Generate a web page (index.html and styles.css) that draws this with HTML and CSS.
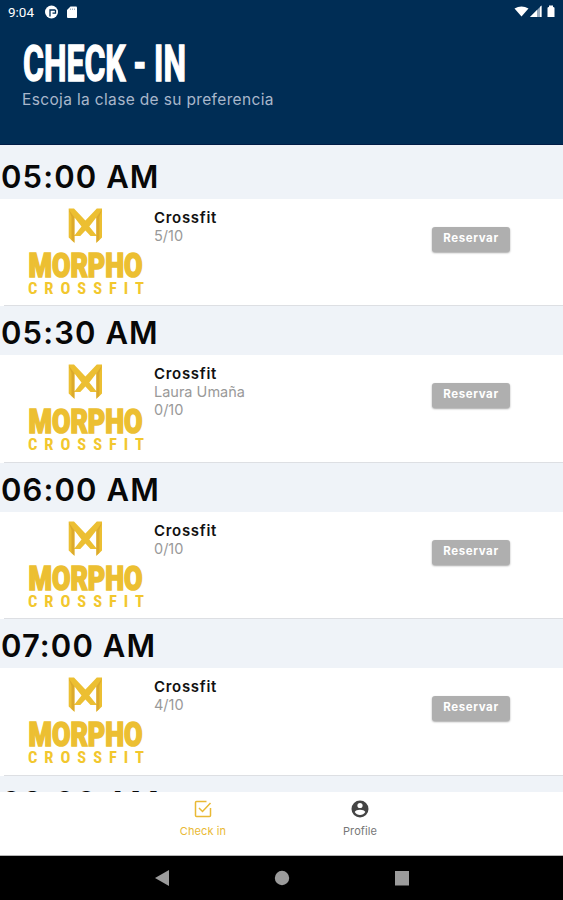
FILE: index.html
```
<!DOCTYPE html>
<html lang="es">
<head>
    <meta charset="UTF-8">
    <meta name="viewport" content="width=device-width, initial-scale=1.0">
    <title>Check - In</title>
    <link rel="stylesheet" href="styles.css">
</head>
<body>
    <!-- logo compartido por todas las clases -->
    <svg class="defs" width="0" height="0">
        <symbol id="logo" viewBox="0 0 130 100">
            <path fill="#ecbf32" d="M48.7 8.500H54L65.400 20.500 76.800 8.500H82V37.500L76.300 43V17.500L69.300 26.500 77 36H70.500L65.400 30.500 60.300 36H54L61.500 26.500 54.500 17.500V43L48.700 37.500Z"/>
            <path fill="#d29c28" d="M48.700 9.500L54.500 17.500V42.500L51.500 40V17ZM82 9.500L76.300 17.500V42.500L79.300 40V17Z" opacity=".6"/>
            <text class="logo-name" x="8.500" y="76.500" textLength="114" lengthAdjust="spacingAndGlyphs">MORPHO</text>
            <text class="logo-sub" x="8" y="94" textLength="116">CROSSFIT</text>
        </symbol>
    </svg>

    <header class="header">
        <div class="status-bar">
            <span class="clock">9:04</span>
            <svg class="status-left" width="34" height="14" viewBox="0 0 34 14">
                <circle cx="6.500" cy="7" r="6.500" fill="#fff"/>
                <path d="M5 11.500V5H10.500M7.500 8.200H10.500V5" fill="none" stroke="#002d55" stroke-width="1.300"/>
                <path d="M25.500 1.500H31Q32 1.500 32 2.500V12Q32 13 31 13H23Q22 13 22 12V5Z" fill="#fff"/>
                <path d="M25.500 3.500V5M27.500 3.500V5M29.500 3.500V5" stroke="#8ba0b5" stroke-width=".8"/>
            </svg>
            <svg class="status-right" width="44" height="14" viewBox="0 0 44 14">
                <path d="M.5 3.500Q7.500 -.5 14.500 3.500L7.500 11.500Z" fill="#fff"/>
                <path d="M16 12L27.500 .5V12Z" fill="#9aabbe"/>
                <path d="M16 12L23 5V12ZM26 2L27.500 .5V12H26Z" fill="#fff"/>
                <path d="M33.500 3Q33.500 2 35 2V.5H39V2Q40.500 2 40.500 3V12H33.500Z" fill="#fff"/>
            </svg>
        </div>
        <svg class="title" width="176" height="62" role="heading" aria-level="1">
            <text x="0" y="50" textLength="163" lengthAdjust="spacingAndGlyphs">CHECK - IN</text>
        </svg>
        <p class="subtitle">Escoja la clase de su preferencia</p>
    </header>

    <main class="schedule">
        <section class="slot">
            <h2>05:00 AM</h2>
            <div class="class-row">
                <svg class="logo"><use href="#logo"/></svg>
                <div class="info">
                    <h3>Crossfit</h3>
                    <p>5/10</p>
                </div>
                <button class="reserve">Reservar</button>
            </div>
        </section>
        <section class="slot">
            <h2>05:30 AM</h2>
            <div class="class-row">
                <svg class="logo"><use href="#logo"/></svg>
                <div class="info">
                    <h3>Crossfit</h3>
                    <p>Laura Umaña</p>
                    <p>0/10</p>
                </div>
                <button class="reserve">Reservar</button>
            </div>
        </section>
        <section class="slot">
            <h2>06:00 AM</h2>
            <div class="class-row">
                <svg class="logo"><use href="#logo"/></svg>
                <div class="info">
                    <h3>Crossfit</h3>
                    <p>0/10</p>
                </div>
                <button class="reserve">Reservar</button>
            </div>
        </section>
        <section class="slot">
            <h2>07:00 AM</h2>
            <div class="class-row">
                <svg class="logo"><use href="#logo"/></svg>
                <div class="info">
                    <h3>Crossfit</h3>
                    <p>4/10</p>
                </div>
                <button class="reserve">Reservar</button>
            </div>
        </section>
        <section class="slot">
            <h2>08:00 AM</h2>
        </section>
    </main>

    <nav class="tabs">
        <a class="tab active">
            <svg width="18" height="18" viewBox="0 0 18 18" fill="none" stroke="currentColor" stroke-width="1.500">
                <path d="M12.500 1.500H2.500Q1.500 1.500 1.500 2.500V15.500Q1.500 16.500 2.500 16.500H15.500Q16.500 16.500 16.500 15.500V8"/>
                <path d="M5 8L8.500 11.500L16.500 3"/>
            </svg>
            <span>Check in</span>
        </a>
        <a class="tab">
            <svg width="18" height="18" viewBox="0 0 18 18">
                <circle cx="9" cy="9" r="8.500" fill="#444"/>
                <circle cx="9" cy="5.500" r="2.600" fill="#fff"/>
                <path d="M3.700 12Q5 9.800 9 9.800T14.300 12Q12.500 15 9 15T3.700 12Z" fill="#fff"/>
            </svg>
            <span>Profile</span>
        </a>
    </nav>

    <footer class="android-nav">
        <svg width="16" height="18" viewBox="0 0 16 18"><path d="M15 1V17L1 9Z" fill="#9b9b9b"/></svg>
        <svg width="16" height="18" viewBox="0 0 16 18"><circle cx="8" cy="9" r="7.200" fill="#9b9b9b"/></svg>
        <svg width="16" height="18" viewBox="0 0 16 18"><path d="M1 2H15V16.500H1Z" fill="#9b9b9b"/></svg>
    </footer>
</body>
</html>
```
FILE: styles.css
```
* {
    box-sizing: border-box;
}

body {
    margin: 0;
    height: 900px;
    display: flex;
    flex-direction: column;
    overflow: hidden;
    background-color: #fff;
    font-family: Inter, Roboto, sans-serif;
}

h2, h3, p {
    margin: 0;
}

.defs {
    position: absolute;
}

.header {
    height: 145px;
    flex: none;
    background-color: #002d55;
    border-bottom: 1px solid #001c46;
    color: #fff;
}

.status-bar {
    display: flex;
    align-items: center;
    height: 24px;
    padding: 0 5px 0 8px;
}

.clock {
    width: 37px;
    font: 400 13.5px Roboto, sans-serif;
}

.status-right {
    margin-left: auto;
}

.title {
    display: block;
    margin: 7px 0 0 23px;
}

.title text {
    font: 700 50px Roboto, sans-serif;
    fill: #fff;
    stroke: #fff;
    stroke-width: 1.4px;
}

.subtitle {
    margin-left: 22px;
    margin-top: -3px;
    font-size: 15.5px;
    line-height: 20px;
    letter-spacing: 0.35px;
    color: #a9b7cb;
}

.schedule {
    height: 647px;
    flex: none;
    padding-top: 5px;
    overflow: hidden;
    background-color: #eff3f8;
}

.slot {
    height: 156.4px;
}

.slot h2 {
    height: 49px;
    padding-left: 1px;
    line-height: 53px;
    font-size: 31px;
    font-weight: 600;
    letter-spacing: 1.1px;
    color: #080808;
    white-space: nowrap;
}

.class-row {
    display: flex;
    align-items: flex-start;
    height: 107.4px;
    background: linear-gradient(#dddfe3, #dddfe3) 4px 100% / 100% 1px no-repeat #fff;
}

.logo {
    width: 130px;
    height: 100px;
    margin: 1px 0 0 20px;
    flex: none;
}

.logo-name {
    font: 900 33px Roboto, sans-serif;
    fill: #ecbf32;
    stroke: #ecbf32;
    stroke-width: 1.6px;
}

.logo-sub {
    font: 700 16.5px "Liberation Sans Narrow", "Roboto Condensed", Roboto, sans-serif;
    fill: #f2c72e;
}

.info {
    width: 282px;
    padding: 9px 0 0 4px;
    font-size: 14.5px;
    line-height: 17.5px;
    color: #999;
}

.info h3 {
    font-size: 15px;
    line-height: 19px;
    font-weight: 600;
    letter-spacing: 0.7px;
    color: #111;
}

.reserve {
    width: 78px;
    height: 25px;
    margin-top: 28px;
    padding: 0 0 3px;
    border: none;
    border-radius: 3px;
    background-color: #afafaf;
    box-shadow: 0 1px 2px rgba(0, 0, 0, 0.35);
    color: #fff;
    font: 700 11.5px Inter, sans-serif;
    letter-spacing: 0.6px;
}

.tabs {
    display: flex;
    justify-content: center;
    height: 64px;
    flex: none;
    background-color: #fff;
    border-bottom: 1px solid #b5b5b5;
}

.tab {
    display: flex;
    flex-direction: column;
    align-items: center;
    width: 157px;
    padding-top: 8px;
    font-size: 11px;
    line-height: 14px;
    letter-spacing: 0.1px;
    color: #777;
}

.tab span {
    margin-top: 6px;
}

.tab.active {
    color: #e9b934;
}

.android-nav {
    display: flex;
    justify-content: center;
    align-items: center;
    gap: 104px;
    flex: 1;
    background-color: #000;
}
```
